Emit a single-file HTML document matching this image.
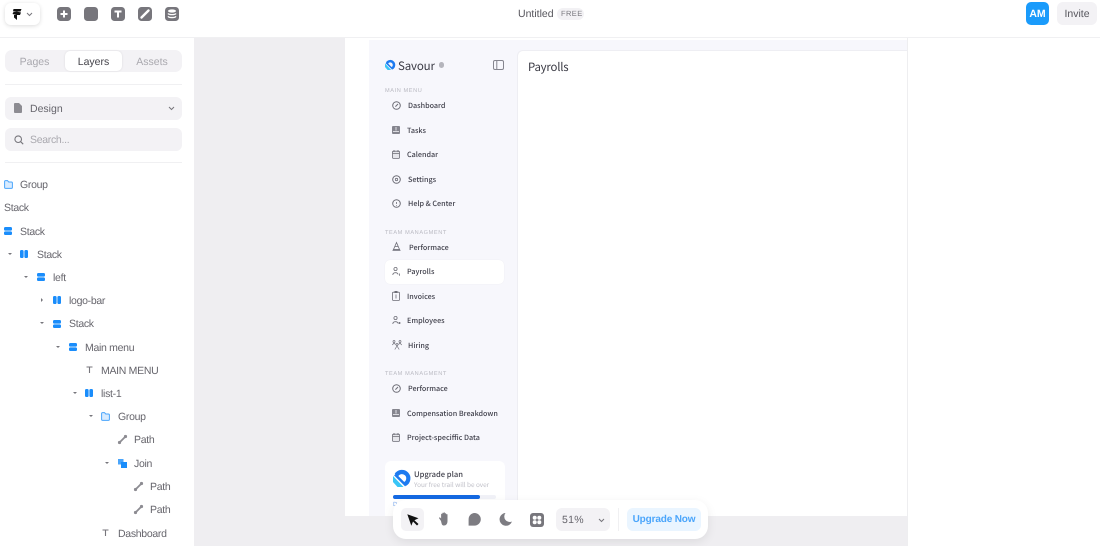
<!DOCTYPE html>
<html><head><meta charset="utf-8"><style>
*{box-sizing:border-box}
html,body{margin:0;padding:0;width:1100px;height:546px;overflow:hidden;background:#fff;font-family:"Liberation Sans",sans-serif;text-rendering:geometricPrecision}
#w{position:absolute;left:0;top:0;width:1100px;height:546px;overflow:hidden;filter:blur(.3px)}
.a{position:absolute}
.t{position:absolute;white-space:nowrap;line-height:14px}
.l{font-size:10.5px;color:#66656c;letter-spacing:-.3px;margin-top:.6px}
.k{letter-spacing:0}
.m{font-family:"Noto Sans CJK SC","Liberation Sans",sans-serif;font-size:7.2px;color:#3f3f4a;line-height:12px;position:absolute;white-space:nowrap;font-weight:500;margin-top:.6px}
.h{font-family:"Liberation Sans",sans-serif;font-size:5.6px;color:#b8b8c0;letter-spacing:.6px;position:absolute;white-space:nowrap;line-height:8px;margin-top:1px}
svg{position:absolute;overflow:visible}
.tb{position:absolute;top:7px;width:14px;height:14px;border-radius:3.5px;background:#77767c}
.tri{position:absolute;width:0;height:0;border-left:2px solid transparent;border-right:2px solid transparent;border-top:2.5px solid #77767c}
.triR{position:absolute;width:0;height:0;border-top:2px solid transparent;border-bottom:2px solid transparent;border-left:2.5px solid #77767c}
</style></head><body><div id="w">
<!-- canvas -->
<div class="a" style="left:194px;top:38px;width:714px;height:508px;background:#efeef1"></div>
<div class="a" style="left:345px;top:38px;width:562px;height:478px;background:#fff"></div>
<div class="a" style="left:369px;top:40px;width:538px;height:476px;background:#f7f7fc"></div>
<div class="a" style="left:517px;top:50px;width:390px;height:466px;background:#fff;border-radius:6px 0 0 0;border:1px solid #eeeef3;border-width:1px 0 0 1px"></div>
<div class="a" style="left:907px;top:38px;width:1px;height:508px;background:#eeeef0"></div>
<!-- top bar -->
<div class="a" style="left:0;top:37px;width:1100px;height:1px;background:#f0f0f2"></div>
<div class="a" style="left:194px;top:38px;width:1px;height:508px;background:#efeef1"></div>
<div class="a" style="left:5px;top:3px;width:35px;height:22px;border-radius:6px;background:#fff;box-shadow:0 1px 4px rgba(0,0,0,.14)"></div>
<svg style="left:12px;top:9px" width="10" height="11" viewBox="0 0 10 11"><path d="M1.5 0H9.5L8.5 2.5H4.5L9 3.5L8 6H5V7.5L5 11L2 8.5V6H4.5L.5 5L1.5 3H5L1 2.2Z" fill="#111"/></svg>
<svg style="left:26px;top:12px" width="7" height="5" viewBox="0 0 7 5"><path d="M1 1L3.5 3.5L6 1" fill="none" stroke="#77767c" stroke-width="1"/></svg>
<div class="tb" style="left:57px"><svg style="left:0;top:0" width="14" height="14"><path d="M7 3.5V10.5M3.5 7H10.5" stroke="#fff" stroke-width="2"/></svg></div>
<div class="tb" style="left:84px"></div>
<div class="tb" style="left:111px"><svg style="left:0;top:0" width="14" height="14"><path d="M3.5 4.5H10.5M7 4.5V10.5" stroke="#fff" stroke-width="2"/></svg></div>
<div class="tb" style="left:138px"><svg style="left:0;top:0" width="14" height="14"><path d="M3.5 10.5L10.5 3.5" stroke="#fff" stroke-width="2.4" stroke-linecap="round"/></svg></div>
<div class="tb" style="left:165px"><svg style="left:0;top:0" width="14" height="14"><ellipse cx="7" cy="4" rx="4" ry="1.6" fill="#fff"/><path d="M3 6.5C4 8 10 8 11 6.5M3 9.3C4 11 10 11 11 9.3" fill="none" stroke="#fff" stroke-width="1.3"/></svg></div>
<div class="t" style="left:518px;top:7px;font-size:10.5px;color:#55545b">Untitled</div>
<div class="a" style="left:557px;top:8px;width:27px;height:12px;border-radius:6px;background:#f2f1f4"></div>
<div class="t" style="left:561px;top:7px;font-size:7.5px;color:#77767c;letter-spacing:.4px">FREE</div>
<div class="a" style="left:1026px;top:2px;width:23px;height:23px;border-radius:5px;background:#1a9bfb"></div>
<div class="t" style="left:1026px;top:7px;width:23px;text-align:center;font-size:10.5px;font-weight:bold;color:#fff">AM</div>
<div class="a" style="left:1057px;top:2px;width:40px;height:23px;border-radius:6px;background:#f3f2f5"></div>
<div class="t" style="left:1057px;top:7px;width:40px;text-align:center;font-size:10.5px;color:#55545b">Invite</div>
<!-- left panel -->
<div class="a" style="left:5px;top:50px;width:177px;height:22px;border-radius:7px;background:#f3f2f5"></div>
<div class="a" style="left:65px;top:51px;width:57px;height:20px;border-radius:5px;background:#fff;box-shadow:0 0 2px rgba(0,0,0,.1)"></div>
<div class="t l k" style="left:5px;width:59px;text-align:center;top:54px;color:#a9a8ae">Pages</div>
<div class="t l k" style="left:65px;width:57px;text-align:center;top:54px;color:#44434a">Layers</div>
<div class="t l k" style="left:122px;width:60px;text-align:center;top:54px;color:#a9a8ae">Assets</div>
<div class="a" style="left:5px;top:84px;width:177px;height:1px;background:#f0f0f2"></div>
<div class="a" style="left:5px;top:97px;width:177px;height:23px;border-radius:6px;background:#f3f2f5"></div>
<svg style="left:14px;top:103px" width="8" height="10" viewBox="0 0 8 10"><path d="M0 1Q0 0 1 0H5L8 3V9Q8 10 7 10H1Q0 10 0 9Z" fill="#8d8c92"/></svg>
<div class="t l k" style="left:30px;top:101px">Design</div>
<svg style="left:168px;top:106px" width="7" height="5" viewBox="0 0 7 5"><path d="M1 1L3.5 3.5L6 1" fill="none" stroke="#77767c" stroke-width="1"/></svg>
<div class="a" style="left:5px;top:128px;width:177px;height:23px;border-radius:6px;background:#f3f2f5"></div>
<svg style="left:14px;top:135px" width="10" height="10" viewBox="0 0 10 10"><circle cx="4.2" cy="4.2" r="3.3" fill="none" stroke="#77767c" stroke-width="1.1"/><path d="M6.7 6.7L9.2 9.2" stroke="#77767c" stroke-width="1.1"/></svg>
<div class="t l" style="left:30px;top:132px;color:#a9a8ae">Search...</div>
<div class="a" style="left:5px;top:162px;width:177px;height:1px;background:#f0f0f2"></div>

<!-- layers -->
<svg style="left:4px;top:180px" width="9" height="9" viewBox="0 0 9 9"><path d="M.6 1.6Q.6.6 1.6.6H3.5L4.7 2H7.4Q8.4 2 8.4 3V7.4Q8.4 8.4 7.4 8.4H1.6Q.6 8.4 .6 7.4Z" fill="#d8ebff" stroke="#4aa5fb" stroke-width="1"/></svg>
<div class="t l" style="left:20px;top:177px">Group</div>
<div class="t l" style="left:4px;top:200.5px">Stack</div>
<svg style="left:4px;top:227px" width="8" height="8"><rect width="8" height="3.6" rx="1.4" fill="#1a8dfb"/><rect y="4.4" width="8" height="3.6" rx="1.4" fill="#1a8dfb"/></svg>
<div class="t l" style="left:20px;top:224px">Stack</div>
<div class="tri" style="left:8px;top:253px"></div>
<svg style="left:20px;top:250px" width="8" height="8"><rect width="3.6" height="8" rx="1.4" fill="#1a8dfb"/><rect x="4.4" width="3.6" height="8" rx="1.4" fill="#1a8dfb"/></svg>
<div class="t l" style="left:37px;top:247px">Stack</div>
<div class="tri" style="left:24px;top:276px"></div>
<svg style="left:37px;top:273px" width="8" height="8"><rect width="8" height="3.6" rx="1.4" fill="#1a8dfb"/><rect y="4.4" width="8" height="3.6" rx="1.4" fill="#1a8dfb"/></svg>
<div class="t l" style="left:53px;top:270px">left</div>
<div class="triR" style="left:41px;top:298px"></div>
<svg style="left:53px;top:296px" width="8" height="8"><rect width="3.6" height="8" rx="1.4" fill="#1a8dfb"/><rect x="4.4" width="3.6" height="8" rx="1.4" fill="#1a8dfb"/></svg>
<div class="t l" style="left:69px;top:293px">logo-bar</div>
<div class="tri" style="left:40px;top:322px"></div>
<svg style="left:53px;top:320px" width="8" height="8"><rect width="8" height="3.6" rx="1.4" fill="#1a8dfb"/><rect y="4.4" width="8" height="3.6" rx="1.4" fill="#1a8dfb"/></svg>
<div class="t l" style="left:69px;top:316.5px">Stack</div>
<div class="tri" style="left:56px;top:346px"></div>
<svg style="left:69px;top:343px" width="8" height="8"><rect width="8" height="3.6" rx="1.4" fill="#1a8dfb"/><rect y="4.4" width="8" height="3.6" rx="1.4" fill="#1a8dfb"/></svg>
<div class="t l" style="left:85px;top:340px">Main menu</div>
<svg style="left:86px;top:366px" width="7" height="7"><path d="M.5 1H6.5M3.5 1V7" stroke="#77767c" stroke-width="1.1" fill="none"/></svg>
<div class="t l" style="left:101px;top:363px">MAIN MENU</div>
<div class="tri" style="left:73px;top:392px"></div>
<svg style="left:85px;top:389px" width="8" height="8"><rect width="3.6" height="8" rx="1.4" fill="#1a8dfb"/><rect x="4.4" width="3.6" height="8" rx="1.4" fill="#1a8dfb"/></svg>
<div class="t l" style="left:101px;top:386px">list-1</div>
<div class="tri" style="left:89px;top:415px"></div>
<svg style="left:101px;top:412px" width="9" height="9" viewBox="0 0 9 9"><path d="M.6 1.6Q.6.6 1.6.6H3.5L4.7 2H7.4Q8.4 2 8.4 3V7.4Q8.4 8.4 7.4 8.4H1.6Q.6 8.4 .6 7.4Z" fill="#d8ebff" stroke="#4aa5fb" stroke-width="1"/></svg>
<div class="t l" style="left:118px;top:409px">Group</div>
<svg style="left:118px;top:435px" width="9" height="9"><path d="M1.5 7.5L7.5 1.5" stroke="#8d8c92" stroke-width="1.8"/><circle cx="1.5" cy="7.5" r="1.6" fill="#8d8c92"/><circle cx="7.5" cy="1.5" r="1.6" fill="#8d8c92"/></svg>
<div class="t l" style="left:134px;top:432.5px">Path</div>
<div class="tri" style="left:105px;top:462px"></div>
<svg style="left:118px;top:459px" width="9" height="9"><rect width="5.5" height="5.5" fill="#4aa5fb"/><rect x="3" y="3" width="6" height="6" fill="#1a8dfb"/></svg>
<div class="t l" style="left:134px;top:456px">Join</div>
<svg style="left:134px;top:482px" width="9" height="9"><path d="M1.5 7.5L7.5 1.5" stroke="#8d8c92" stroke-width="1.8"/><circle cx="1.5" cy="7.5" r="1.6" fill="#8d8c92"/><circle cx="7.5" cy="1.5" r="1.6" fill="#8d8c92"/></svg>
<div class="t l" style="left:150px;top:479px">Path</div>
<svg style="left:134px;top:505px" width="9" height="9"><path d="M1.5 7.5L7.5 1.5" stroke="#8d8c92" stroke-width="1.8"/><circle cx="1.5" cy="7.5" r="1.6" fill="#8d8c92"/><circle cx="7.5" cy="1.5" r="1.6" fill="#8d8c92"/></svg>
<div class="t l" style="left:150px;top:502px">Path</div>
<svg style="left:102px;top:529px" width="7" height="7"><path d="M.5 1H6.5M3.5 1V7" stroke="#77767c" stroke-width="1.1" fill="none"/></svg>
<div class="t l" style="left:118px;top:526px">Dashboard</div>

<!-- app sidebar -->
<svg style="left:385px;top:60px" width="10" height="10" viewBox="0 0 17 17"><path d="M3.5 5A6.4 6.4 0 1 1 12 14" fill="none" stroke="#1d7bf0" stroke-width="4.2"/><path d="M0 6L10.5 17H4.5L0 12Z" fill="#39c5f7"/><path d="M2 4.5L13 15.5" stroke="#1d7bf0" stroke-width="2.6"/></svg>
<div class="m" style="left:398px;top:58px;font-size:11.5px;line-height:14px;font-weight:400;color:#3a3a44;letter-spacing:-.15px">Savour</div>
<div class="a" style="left:439px;top:62px;width:5px;height:6px;border-radius:2.5px;background:#b5b5bc"></div>
<svg style="left:493px;top:60px" width="11" height="10"><rect x=".5" y=".5" width="10" height="9" rx="1.5" fill="none" stroke="#85858e"/><path d="M3.8 .5V9.5" stroke="#85858e"/></svg>
<div class="h" style="left:385px;top:86px">MAIN MENU</div>

<svg style="left:392px;top:101px" width="9" height="9"><circle cx="4.5" cy="4.5" r="3.8" fill="none" stroke="#6d6d76"/><path d="M3.4 5.6L6 3" stroke="#6d6d76"/></svg>
<div class="m" style="left:408px;top:99px">Dashboard</div>
<svg style="left:392px;top:126px" width="8" height="8"><rect width="8" height="8" rx="1" fill="#85858e"/><path d="M4 1V4.5M1 5.5H7" stroke="#f7f7fc" stroke-width=".8"/></svg>
<div class="m" style="left:407px;top:124px">Tasks</div>
<svg style="left:392px;top:150px" width="8" height="9"><rect x=".5" y="1.2" width="7" height="7.2" rx="1" fill="#e6e6eb" stroke="#6d6d76" stroke-width=".8"/><path d="M2 0V2M6 0V2M.5 3.5H7.5" stroke="#6d6d76" stroke-width=".8"/></svg>
<div class="m" style="left:407px;top:148.5px">Calendar</div>
<svg style="left:392px;top:175px" width="9" height="9"><circle cx="4.5" cy="4.5" r="3.8" fill="none" stroke="#6d6d76"/><circle cx="4.5" cy="4.5" r="1.2" fill="none" stroke="#6d6d76" stroke-width=".8"/></svg>
<div class="m" style="left:408px;top:173px">Settings</div>
<svg style="left:392px;top:199px" width="9" height="9"><circle cx="4.5" cy="4.5" r="3.8" fill="none" stroke="#6d6d76"/><path d="M4.5 3V5M4.5 6V6.8" stroke="#6d6d76" stroke-width=".8"/></svg>
<div class="m" style="left:408px;top:197px">Help &amp; Center</div>

<div class="h" style="left:385px;top:228px">TEAM MANAGMENT</div>
<svg style="left:392px;top:242px" width="9" height="9"><path d="M4.5 .5L1.5 7.5H7.5ZM.5 8.3H8.5M3 4.5H6" fill="none" stroke="#6d6d76" stroke-width=".8"/></svg>
<div class="m" style="left:409px;top:241px">Performace</div>
<div class="a" style="left:385px;top:260px;width:119px;height:24px;border-radius:5px;background:#fff;box-shadow:0 0 1px rgba(0,0,0,.08)"></div>
<svg style="left:392px;top:267px" width="9" height="9"><circle cx="3.5" cy="2" r="1.6" fill="none" stroke="#6d6d76" stroke-width=".8"/><path d="M.8 8C.8 5 6 5 6 7.5M7.5 6.5V8.8" fill="none" stroke="#6d6d76" stroke-width=".8"/></svg>
<div class="m" style="left:407px;top:265.5px">Payrolls</div>
<svg style="left:392px;top:291px" width="8" height="10"><rect x=".5" y="1.2" width="7" height="8.3" rx="1" fill="none" stroke="#6d6d76" stroke-width=".8"/><rect x="2.5" y="0" width="3" height="2" fill="#6d6d76"/><path d="M4 3.5V7.5" stroke="#6d6d76" stroke-width=".8"/></svg>
<div class="m" style="left:407px;top:290px">Invoices</div>
<svg style="left:392px;top:316px" width="9" height="9"><circle cx="3.5" cy="2" r="1.6" fill="none" stroke="#6d6d76" stroke-width=".8"/><path d="M.8 8C.8 5 6 5 6 7.5" fill="none" stroke="#6d6d76" stroke-width=".8"/><circle cx="7.5" cy="7" r="1" fill="#6d6d76"/></svg>
<div class="m" style="left:407px;top:314.5px">Employees</div>
<svg style="left:392px;top:340px" width="10" height="10"><circle cx="2" cy="1.5" r="1" fill="none" stroke="#6d6d76" stroke-width=".7"/><circle cx="8" cy="1.5" r="1" fill="none" stroke="#6d6d76" stroke-width=".7"/><circle cx="5" cy="4.5" r="1" fill="none" stroke="#6d6d76" stroke-width=".7"/><path d="M.3 5L2 3L3.5 4.5M9.7 5L8 3L6.5 4.5M2.8 9.5L5 6L7.2 9.5" fill="none" stroke="#6d6d76" stroke-width=".7"/></svg>
<div class="m" style="left:408px;top:339px">Hiring</div>

<div class="h" style="left:385px;top:369px">TEAM MANAGMENT</div>
<svg style="left:392px;top:384px" width="9" height="9"><circle cx="4.5" cy="4.5" r="3.8" fill="none" stroke="#6d6d76"/><path d="M3.4 5.6L6 3" stroke="#6d6d76"/></svg>
<div class="m" style="left:408px;top:382.5px">Performace</div>
<svg style="left:392px;top:409px" width="8" height="8"><rect width="8" height="8" rx="1" fill="#85858e"/><path d="M4 1V4.5M1 5.5H7" stroke="#f7f7fc" stroke-width=".8"/></svg>
<div class="m" style="left:407px;top:407px">Compensation Breakdown</div>
<svg style="left:392px;top:433px" width="8" height="9"><rect x=".5" y="1.2" width="7" height="7.2" rx="1" fill="#e6e6eb" stroke="#6d6d76" stroke-width=".8"/><path d="M2 0V2M6 0V2M.5 3.5H7.5" stroke="#6d6d76" stroke-width=".8"/></svg>
<div class="m" style="left:407px;top:431.5px">Project-speciffic Data</div>

<div class="a" style="left:385px;top:461px;width:120px;height:55px;border-radius:6px 6px 0 0;background:#fff"></div>
<svg style="left:393px;top:470px" width="17" height="17" viewBox="0 0 17 17"><path d="M3.5 5A6.4 6.4 0 1 1 12 14" fill="none" stroke="#1d7bf0" stroke-width="4.2"/><path d="M0 6L10.5 17H4.5L0 12Z" fill="#39c5f7"/><path d="M2 4.5L13 15.5" stroke="#1d7bf0" stroke-width="2.6"/></svg>
<div class="m" style="left:414px;top:468px;font-size:7.6px">Upgrade plan</div>
<div class="m" style="left:414px;top:478px;font-size:6.4px;color:#c0c0c8;font-weight:400">Your free trail will be over</div>
<div class="a" style="left:393px;top:495px;width:103px;height:4px;background:#f1f2f8;border-radius:2px"></div>
<div class="a" style="left:393px;top:495px;width:87px;height:4px;background:#1469e2;border-radius:2px"></div>
<div class="t" style="left:393px;top:501px;font-size:6px;line-height:8px;color:#7aa9ee">D</div>

<div class="m" style="left:528px;top:59.5px;font-size:11.4px;line-height:15px;font-weight:400;color:#3a3a44;letter-spacing:-.2px">Payrolls</div>

<!-- bottom toolbar -->
<div class="a" style="left:393px;top:500px;width:315px;height:39px;border-radius:13px;background:#fff;box-shadow:0 3px 10px rgba(0,0,0,.08)"></div>
<div class="a" style="left:401px;top:508px;width:23px;height:23px;border-radius:5px;background:#f3f2f5"></div>
<svg style="left:407px;top:514px" width="12" height="12" viewBox="0 0 12 12"><path d="M.3.3L11.5 4.3L7.4 6.2L11.5 10L10 11.5L6 7.5L4.3 11.8Z" fill="#111"/></svg>
<svg style="left:437px;top:512px" width="13" height="14" viewBox="0 0 10 14"><path d="M2.5 9L.6 6.3C.2 5.5 1.2 5 1.8 5.6L2.6 6.5V2.3C2.6 1.5 3.8 1.5 3.8 2.3V1.3C3.8.5 5.1.5 5.1 1.3V1C5.1.2 6.4.2 6.4 1V1.8C6.4 1 7.7 1 7.7 1.8V2.6C7.7 1.9 9 1.9 9 2.6V9C9 12 7.5 13.5 5.5 13.5S3.3 12.5 2.5 9Z" fill="#7d7c82"/></svg>
<svg style="left:468px;top:513px" width="13" height="13" viewBox="0 0 13 13"><path d="M6.5 0A6.3 6.3 0 0 1 6.5 12.6H.6V6.5A6.2 6.2 0 0 1 6.5 0Z" fill="#7d7c82"/></svg>
<svg style="left:500px;top:513px" width="12" height="13" viewBox="0 0 12 13"><path d="M5.5 0A6.4 6.4 0 1 0 12 8.5A5.5 5.5 0 0 1 5.5 0Z" fill="#7d7c82"/></svg>
<div class="a" style="left:530px;top:513px;width:14px;height:14px;border-radius:3px;background:#77767c"></div>
<svg style="left:530px;top:513px" width="14" height="14"><circle cx="4.7" cy="4.7" r="2" fill="#fff"/><circle cx="9.3" cy="4.7" r="2" fill="#fff"/><circle cx="4.7" cy="9.3" r="2" fill="#fff"/><circle cx="9.3" cy="9.3" r="2" fill="#fff"/></svg>
<div class="a" style="left:556px;top:508px;width:54px;height:23px;border-radius:6px;background:#f3f2f5"></div>
<div class="t" style="left:562px;top:513px;font-size:10.5px;color:#66656c;letter-spacing:.3px">51%</div>
<svg style="left:598px;top:518px" width="7" height="5" viewBox="0 0 7 5"><path d="M1 1L3.5 3.5L6 1" fill="none" stroke="#77767c" stroke-width="1"/></svg>
<div class="a" style="left:618px;top:508px;width:1px;height:23px;background:#f0f0f2"></div>
<div class="a" style="left:627px;top:508px;width:74px;height:23px;border-radius:6px;background:#eaf5ff"></div>
<div class="t" style="left:627px;top:513px;width:74px;text-align:center;font-size:10px;font-weight:bold;color:#4aa5fb;letter-spacing:-.15px">Upgrade Now</div>
</div></body></html>
